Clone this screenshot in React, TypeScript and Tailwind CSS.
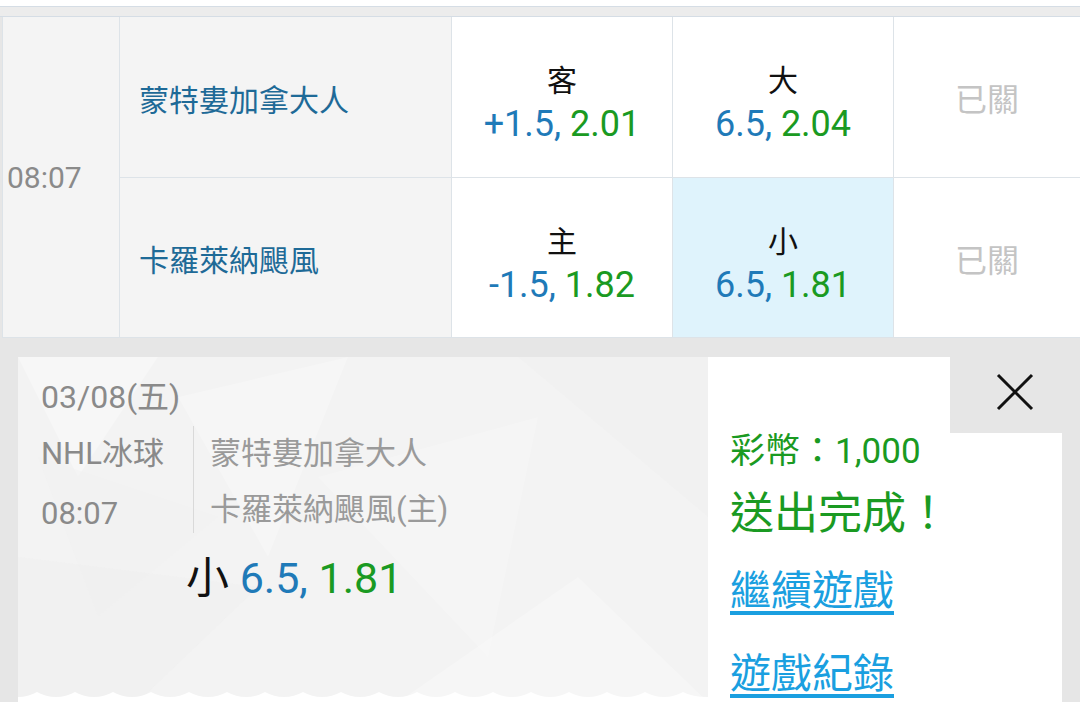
import React from "react";

const font = "font-['Roboto','Noto_Sans_CJK_TC',sans-serif]";

interface OddsCellProps {
  label: string;
  line: string;
  odds: string;
  active?: boolean;
}

function OddsCell({ label, line, odds, active }: OddsCellProps) {
  return (
    <div
      className={`flex flex-col items-center justify-center pt-[14px] border-b border-r border-[#dde3e8] ${
        active ? "bg-[#dff3fc]" : "bg-white"
      }`}
    >
      <div className="text-[30px] leading-[40px] text-[#111]">{label}</div>
      <div className="text-[36px] leading-[46px]">
        <span className="text-[#1f7ab8]">{line}, </span>
        <span className="text-[#1a9a22]">{odds}</span>
      </div>
    </div>
  );
}

function ClosedCell() {
  return (
    <div className="flex items-center justify-center pt-[6px] border-b border-[#dde3e8] bg-white text-[32px] text-[#c4c4c4]">
      已關
    </div>
  );
}

function TeamCell({ name }: { name: string }) {
  return (
    <div className="flex items-center pl-[19px] pt-[6px] border-b border-r border-[#dde3e8] bg-[#f4f4f4] text-[30px] text-[#1e6a97]">
      {name}
    </div>
  );
}

export default function App() {
  return (
    <div className={`w-[1080px] h-[702px] overflow-hidden bg-[#e6e6e6] ${font}`}>
      {/* top strips */}
      <div className="h-[7px] bg-white border-b border-[#d5dde5]" />
      <div className="h-[10px] bg-[#ececec] border-b border-[#d5dde5]" />

      {/* odds table */}
      <div className="grid grid-cols-[117px_332px_221px_221px_1fr] grid-rows-[161px_160px] ml-[2px] border-l border-[#dde3e8]">
        <div className="row-span-2 flex items-center pl-[4px] bg-[#f4f4f4] border-r border-b border-[#dde3e8] text-[30px] text-[#8a8a8a]">
          08:07
        </div>
        <TeamCell name="蒙特婁加拿大人" />
        <OddsCell label="客" line="+1.5" odds="2.01" />
        <OddsCell label="大" line="6.5" odds="2.04" />
        <ClosedCell />
        <TeamCell name="卡羅萊納颶風" />
        <OddsCell label="主" line="-1.5" odds="1.82" />
        <OddsCell label="小" line="6.5" odds="1.81" active />
        <ClosedCell />
      </div>

      {/* ticket */}
      <div className="flex mt-[19px] ml-[18px] mr-[18px] h-[345px]">
        <div className="relative w-[690px] bg-[#f3f3f3] overflow-hidden">
          <svg className="absolute inset-0" width="690" height="345" viewBox="0 0 690 345">
            <polygon points="0,0 140,0 60,120" fill="#ffffff" opacity="0.35" />
            <polygon points="160,40 330,0 250,200" fill="#ffffff" opacity="0.25" />
            <polygon points="0,200 240,230 120,345 0,345" fill="#ededed" opacity="0.4" />
            <polygon points="300,120 520,60 470,300" fill="#ffffff" opacity="0.2" />
            <polygon points="500,0 690,0 690,160" fill="#efefef" opacity="0.35" />
            <polygon points="380,345 560,220 690,345" fill="#ffffff" opacity="0.25" />
            <polygon points="20,100 200,160 80,260" fill="#f0f0f0" opacity="0.4" />
            <path
              d="M0 345 L0 340 Q10 340 19 335 Q28 340 38 340 Q48 340 57 335 Q66 340 76 340 Q86 340 95 335 Q104 340 114 340 Q124 340 133 335 Q142 340 152 340 Q162 340 171 335 Q180 340 190 340 Q200 340 209 335 Q218 340 228 340 Q238 340 247 335 Q256 340 266 340 Q276 340 285 335 Q294 340 304 340 Q314 340 323 335 Q332 340 342 340 Q352 340 361 335 Q370 340 380 340 Q390 340 399 335 Q408 340 418 340 Q428 340 437 335 Q446 340 456 340 Q466 340 475 335 Q484 340 494 340 Q504 340 513 335 Q522 340 532 340 Q542 340 551 335 Q560 340 570 340 Q580 340 589 335 Q598 340 608 340 Q618 340 627 335 Q636 340 646 340 Q656 340 665 335 Q674 340 690 340 L690 345 Z"
              fill="#ffffff"
            />
          </svg>

          <div className="relative pl-[23px] pt-[21px]">
            <div className="text-[32px] leading-[38px] text-[#8a8a8a]">03/08(五)</div>
            <div className="flex mt-[10px]">
              <div className="w-[152px] text-[31px] leading-[60px] -mt-[2px] text-[#8a8a8a]">
                <div>NHL冰球</div>
                <div>08:07</div>
              </div>
              <div className="border-l border-[#d9d9d9] pl-[16px] h-[107px] text-[31px] leading-[56px] text-[#9a9a9a]">
                <div>蒙特婁加拿大人</div>
                <div>卡羅萊納颶風(主)</div>
              </div>
            </div>
            <div className="ml-[145px] -mt-[4px] text-[43px] leading-[76px]">
              <span className="text-[#111]">小 </span>
              <span className="text-[#1f7ab8]">6.5, </span>
              <span className="text-[#1a9a22]">1.81</span>
            </div>
          </div>
        </div>

        <div className="flex-1 flex flex-col">
          <div className="flex h-[76px] shrink-0">
            <div className="flex-1 bg-white" />
            <div className="w-[112px] flex items-center justify-center pl-[18px] bg-[#e6e6e6] rounded-bl-[22px]">
              <svg width="40" height="40" viewBox="0 0 40 40" className="-mt-[6px]">
                <path d="M3 3 L37 37 M37 3 L3 37" stroke="#111" strokeWidth="3" fill="none" />
              </svg>
            </div>
          </div>
          <div className="flex-1 bg-white pl-[22px]">
            <div className="text-[35px] leading-[44px] -mt-[3px] text-[#1a9a22]">彩幣：1,000</div>
            <div className="text-[44px] leading-[60px] mt-[10px] text-[#1a9a22]">送出完成！</div>
            <div className="text-[41px] leading-[60px] mt-[17px] text-[#1a9fe0] underline underline-offset-[6px]">
              繼續遊戲
            </div>
            <div className="text-[41px] leading-[60px] mt-[23px] text-[#1a9fe0] underline underline-offset-[6px]">
              遊戲紀錄
            </div>
          </div>
        </div>
      </div>
    </div>
  );
}
